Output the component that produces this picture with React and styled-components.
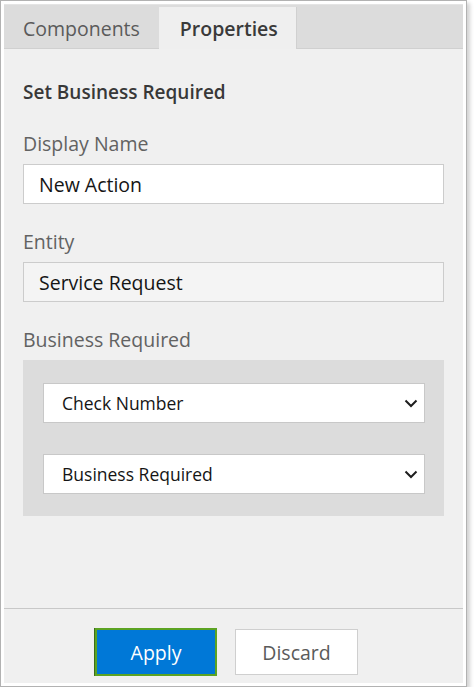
import React from "react";
import styled, { createGlobalStyle } from "styled-components";

const GlobalStyle = createGlobalStyle`
  html, body {
    margin: 0;
    padding: 0;
    background: #ffffff;
  }
  body {
    font-family: "Open Sans", "Noto Sans", Arial, sans-serif;
  }
`;

const Frame = styled.div`
  width: 459px;
  height: 679px;
  padding: 3px;
  border: 1px solid #b2b2b2;
  background: #ffffff;
  box-shadow: 3px 3px 4px rgba(0, 0, 0, 0.18);
`;

const Panel = styled.div`
  height: 100%;
  display: flex;
  flex-direction: column;
  background: #f0f0f0;
  border-top: 1px solid #e4e4e4;
  box-sizing: border-box;
`;

const TabBar = styled.div`
  display: flex;
  height: 43px;
  background: #dcdcdc;
  border-bottom: 1px solid #d0d0d0;
`;

const Tab = styled.div`
  display: flex;
  align-items: center;
  padding-top: ${(p) => (p.$active ? "1px" : "3px")};
  padding-left: ${(p) => (p.$active ? "21px" : "19px")};
  padding-right: ${(p) => (p.$active ? "18px" : "19px")};
  margin-top: ${(p) => (p.$active ? "2px" : "0")};
  margin-bottom: ${(p) => (p.$active ? "-1px" : "0")};
  background: ${(p) => (p.$active ? "#efefef" : "transparent")};
  border-right: ${(p) => (p.$active ? "1px solid #d0d0d0" : "none")};
  font-size: 19.5px;
  font-weight: ${(p) => (p.$active ? 600 : 400)};
  color: ${(p) => (p.$active ? "#3a3a3a" : "#5a5a5a")};
`;

const Body = styled.div`
  flex: 1;
  padding: 31px 19px 0 19px;
  display: flex;
  flex-direction: column;
`;

const Title = styled.div`
  font-size: 19px;
  line-height: 24px;
  font-weight: 600;
  color: #383838;
  margin-bottom: 28px;
`;

const Label = styled.div`
  font-size: 19.5px;
  line-height: 24px;
  color: #626262;
  margin-bottom: 8px;
`;

const Field = styled.div`
  height: 40px;
  box-sizing: border-box;
  border: 1px solid #cccccc;
  background: ${(p) => (p.$readOnly ? "#f4f4f4" : "#ffffff")};
  display: flex;
  align-items: center;
  padding-left: 15px;
  font-size: 19.5px;
  color: #151515;
  margin-bottom: 26px;
`;

const Group = styled.div`
  background: #dcdcdc;
  padding: 23px 19px 22px 20px;
  display: flex;
  flex-direction: column;
  gap: 31px;
`;

const SelectBox = styled.div`
  height: 40px;
  box-sizing: border-box;
  border: 1px solid #c8c8c8;
  background: #ffffff;
  display: flex;
  align-items: center;
  justify-content: space-between;
  padding: 0 6px 0 18px;
  font-size: 17.5px;
  color: #151515;
`;

const Footer = styled.div`
  border-top: 1px solid #c8c8c8;
  padding: 19px 0 7px 91px;
  display: flex;
  gap: 18px;
`;

const Button = styled.div`
  box-sizing: border-box;
  width: ${(p) => (p.$primary ? "122px" : "123px")};
  height: ${(p) => (p.$primary ? "48px" : "46px")};
  margin-top: ${(p) => (p.$primary ? "0" : "1px")};
  display: flex;
  align-items: center;
  justify-content: center;
  font-size: 19.5px;
  background: ${(p) => (p.$primary ? "#0078d7" : "#ffffff")};
  color: ${(p) => (p.$primary ? "#ffffff" : "#5a5a5a")};
  border: ${(p) => (p.$primary ? "2px solid #5ca323" : "1px solid #cfcfcf")};
  box-shadow: ${(p) => (p.$primary ? "-1px 0 0 #3c6e1a" : "none")};
`;

const Chevron = () => (
  <svg width="14" height="9" viewBox="0 0 14 9">
    <path d="M1.5 1.5 L7 7 L12.5 1.5" fill="none" stroke="#1e1e1e" strokeWidth="2" />
  </svg>
);

export default function App() {
  return (
    <>
      <GlobalStyle />
      <Frame>
        <Panel>
          <TabBar>
            <Tab>Components</Tab>
            <Tab $active>Properties</Tab>
          </TabBar>
          <Body>
            <Title>Set Business Required</Title>
            <Label>Display Name</Label>
            <Field>New Action</Field>
            <Label>Entity</Label>
            <Field $readOnly>Service Request</Field>
            <Label>Business Required</Label>
            <Group>
              <SelectBox>
                Check Number
                <Chevron />
              </SelectBox>
              <SelectBox>
                Business Required
                <Chevron />
              </SelectBox>
            </Group>
          </Body>
          <Footer>
            <Button $primary>Apply</Button>
            <Button>Discard</Button>
          </Footer>
        </Panel>
      </Frame>
    </>
  );
}
